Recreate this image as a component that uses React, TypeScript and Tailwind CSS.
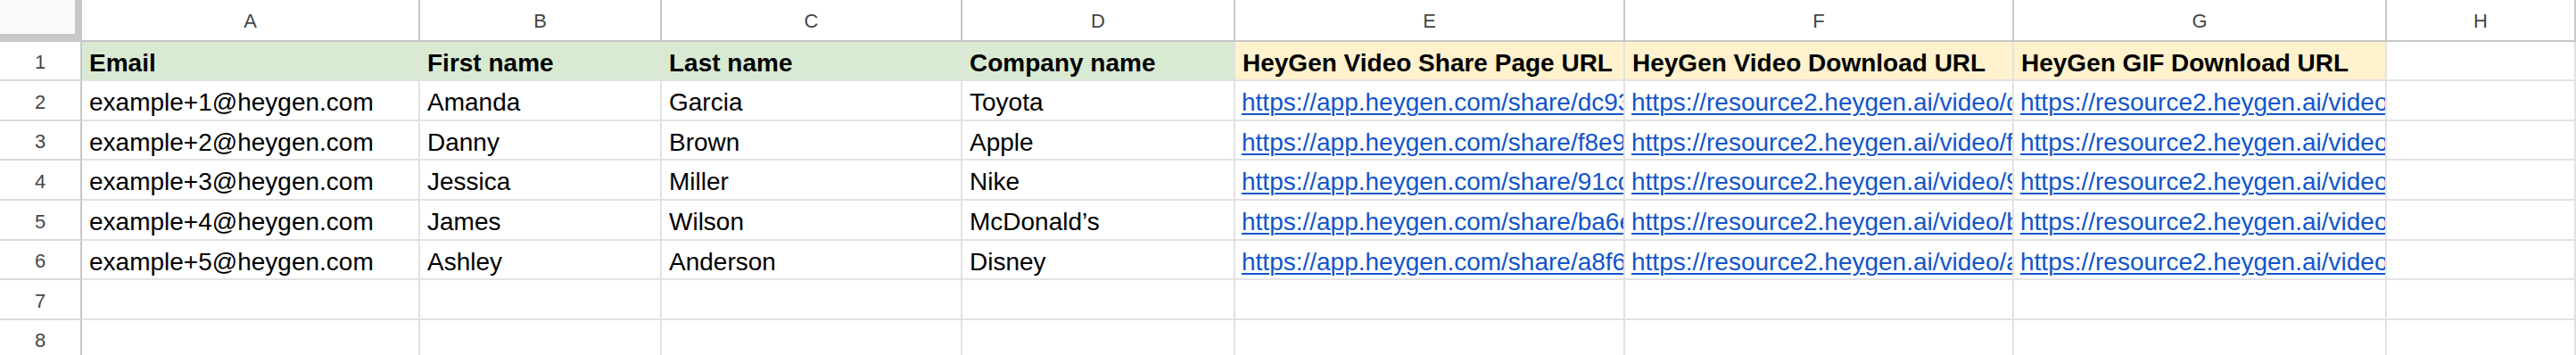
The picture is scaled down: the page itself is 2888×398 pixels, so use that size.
const COLUMNS = ['A', 'B', 'C', 'D', 'E', 'F', 'G', 'H']

const HEADERS = [
  { label: 'Email', fill: 'bg-[#d9ead3]' },
  { label: 'First name', fill: 'bg-[#d9ead3]' },
  { label: 'Last name', fill: 'bg-[#d9ead3]' },
  { label: 'Company name', fill: 'bg-[#d9ead3]' },
  { label: 'HeyGen Video Share Page URL', fill: 'bg-[#fff2cc]' },
  { label: 'HeyGen Video Download URL', fill: 'bg-[#fff2cc]' },
  { label: 'HeyGen GIF Download URL', fill: 'bg-[#fff2cc]' },
  { label: '', fill: 'bg-white' },
]

const PEOPLE = [
  { email: 'example+1@heygen.com', first: 'Amanda', last: 'Garcia', company: 'Toyota', id: 'dc93b1e4a2f84c6b9e0d7a15c3f2b8e4' },
  { email: 'example+2@heygen.com', first: 'Danny', last: 'Brown', company: 'Apple', id: 'f8e9a07c3d1b4e52a6f0c9d8b7e31a24' },
  { email: 'example+3@heygen.com', first: 'Jessica', last: 'Miller', company: 'Nike', id: '91cd4f2e8a7b4c03b5d6e1f9a2c87b30' },
  { email: 'example+4@heygen.com', first: 'James', last: 'Wilson', company: 'McDonald’s', id: 'ba6e03d9c4f14a8b92e7d5c1f0a6b348' },
  { email: 'example+5@heygen.com', first: 'Ashley', last: 'Anderson', company: 'Disney', id: 'a8f6c2b1e9d04f37a5b8c6e2d1f09a73' },
]

// sheet cells clip their text at the right edge, like Sheets does
const cellBase =
  'flex items-center overflow-hidden whitespace-nowrap border-r-2 border-b-2 border-[#e2e2e2] px-[8px] pt-[5px] text-[28px] leading-none'

export default function App() {
  return (
    <div className="h-[398px] w-[2888px] overflow-hidden bg-white font-['Liberation_Sans',Arial,sans-serif] text-[#000]">
      <div className="grid grid-cols-[92px_379px_271px_337px_306px_437px_436px_418px_212px] grid-rows-[47px_44px_45px_44px_45px_45px_44px_45px_44px]">
        {/* corner + column letters */}
        <div className="border-r-[8px] border-b-[9px] border-[#c7c7c7] bg-[#f8f9fa]" />
        {COLUMNS.map((letter) => (
          <div
            key={letter}
            className="flex items-center justify-center border-r-2 border-b-2 border-[#c7c7c7] bg-white pt-[1px] text-[22px] text-[#444746]"
          >
            {letter}
          </div>
        ))}

        {/* row 1: headings */}
        <RowNumber n={1} />
        {HEADERS.map((header, i) => (
          <div key={i} className={`${cellBase} ${header.fill} font-bold`}>
            {header.label}
          </div>
        ))}

        {PEOPLE.map((person, i) => (
          <Row key={person.email} n={i + 2} person={person} />
        ))}

        {[7, 8].map((n) => (
          <EmptyRow key={n} n={n} />
        ))}
      </div>
    </div>
  )
}

function RowNumber({ n }: { n: number }) {
  return (
    <div className="flex items-center justify-center border-r-2 border-b-2 border-r-[#c7c7c7] border-b-[#dadada] bg-white pt-[3px] text-[22px] text-[#444746]">
      {n}
    </div>
  )
}

function Row({ n, person }: any) {
  return (
    <>
      <RowNumber n={n} />
      <div className={cellBase}>{person.email}</div>
      <div className={cellBase}>{person.first}</div>
      <div className={cellBase}>{person.last}</div>
      <div className={cellBase}>{person.company}</div>
      <LinkCell url={`https://app.heygen.com/share/${person.id}`} />
      <LinkCell url={`https://resource2.heygen.ai/video/${person.id}/1280x720.mp4`} />
      <LinkCell url={`https://resource2.heygen.ai/video/gifs/${person.id}.gif`} />
      <div className={cellBase} />
    </>
  )
}

function LinkCell({ url }: { url: string }) {
  return (
    <div className={`${cellBase} pl-[7px] pr-0`}>
      <span className="text-[#1155cc] underline decoration-[2px] underline-offset-[3px]">{url}</span>
    </div>
  )
}

function EmptyRow({ n }: { n: number }) {
  return (
    <>
      <RowNumber n={n} />
      {COLUMNS.map((letter) => (
        <div key={letter} className={cellBase} />
      ))}
    </>
  )
}
